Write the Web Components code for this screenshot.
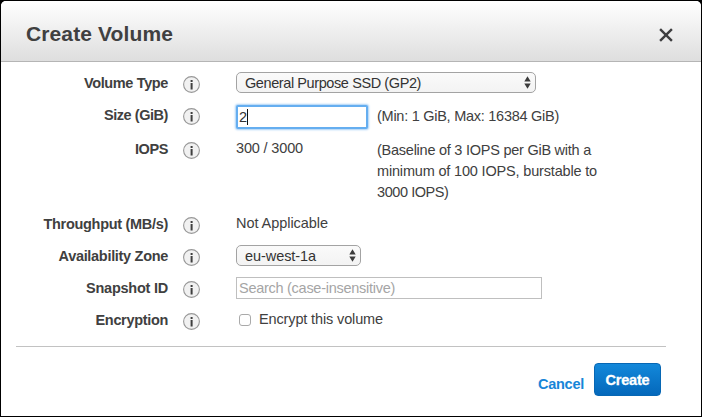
<!DOCTYPE html>
<html lang="en">
<head>
<meta charset="utf-8">
<title>Create Volume</title>
<style>
body{margin:0;background:#000;font:14.5px/20px "Liberation Sans",Arial,sans-serif;color:#404040;overflow:hidden}
</style>
</head>
<body>
<volume-dialog></volume-dialog>
<script>
const define = (name, html, setup) => customElements.define(name, class extends HTMLElement {
  connectedCallback() {
    if (this.shadowRoot) return;
    const t = document.createElement('template');
    t.innerHTML = html;
    this.attachShadow({mode: 'open'}).append(t.content.cloneNode(true));
    if (setup) setup(this, this.shadowRoot);
  }
});

// A single line of text, tracked so that it spans the given width.
define('fit-text', `<style>:host{display:inline-block;white-space:nowrap;width:var(--w)}span{display:inline-block}</style><span><slot></slot></span>`,
  (el, root) => {
    const w = +el.getAttribute('w'), s = root.querySelector('span');
    el.style.setProperty('--w', w + 'px');
    s.style.letterSpacing = (w - s.getBoundingClientRect().width) / el.textContent.length + 'px';
  });

define('info-icon', `<style>:host{display:block;width:17px;height:17px}svg{display:block}</style>
<svg width="17" height="17" viewBox="0 0 17 17"><circle cx="8.5" cy="8.5" r="7.9" fill="#f1f1f1" stroke="#989898" stroke-width="1.1"/><path d="M7.6 4h2v2h-2zM7.6 7h2v6.5h-2z" fill="#3f3f3f"/></svg>`);

define('form-row', `<style>
:host{display:grid;grid-template-columns:168px 17px 1fr;column-gap:15px;height:32px;box-sizing:border-box}
.label{font-weight:bold;text-align:right;padding-top:5px}
info-icon{margin-top:8px}
.value{display:flex;align-items:flex-start;margin-left:21px}
</style><div class="label"><slot name="label"></slot></div><info-icon></info-icon><div class="value"><slot></slot></div>`);

define('select-box', `<style>
:host{display:flex;box-sizing:border-box;height:21px;margin-top:4px;border:1px solid #a3a3a3;border-radius:5px;background:linear-gradient(#fafafa,#f3f3f3);padding:0 4px 0 8px;justify-content:space-between;align-items:center;color:#333}
slot{display:block;line-height:20px;height:19px;margin-top:-1px}
</style><slot></slot><svg width="7" height="13" viewBox="0 0 7 13"><path d="M3.5 .2L6.7 5.6H.3zM3.5 12.8L6.7 7.4H.3z" fill="#3c3c3c"/></svg>`);

define('text-box', `<style>
:host{display:flex;box-sizing:border-box;height:22px;border:1px solid #bfbfbf;background:#fff;padding:0 2px;align-items:center}
:host([focused]){height:24px;border:2px solid #65aef0;border-radius:2px;box-shadow:0 0 2px 1px #a7d0f6;color:#333;padding:0 1px}
.caret{display:none;width:1px;height:16px;background:#111}
:host([focused]) .caret{display:block}
</style><slot></slot><i class="caret"></i>`);

define('check-box', `<style>:host{display:block;box-sizing:border-box;width:12px;height:12px;border:1px solid #aaa;border-radius:3px;background:#fff}</style>`);

define('action-button', `<style>
:host{display:flex;box-sizing:border-box;width:67px;height:33px;border:1px solid #0767b4;border-radius:4px;background:linear-gradient(#1388da,#0468bb);color:#fff;font-weight:bold;justify-content:center;padding-top:6px;-webkit-text-stroke:.3px #fff}
</style><slot></slot>`);

define('close-icon', `<style>:host{display:block}svg{display:block}</style><svg width="14" height="14" viewBox="0 0 14 14"><path d="M1.1 1.1L12.9 12.9M12.9 1.1L1.1 12.9" stroke="#3d3d3f" stroke-width="2.4"/></svg>`);

define('dialog-header', `<style>
:host{display:flex;box-sizing:border-box;height:61px;border-bottom:1px solid #b5b5b5;background:linear-gradient(#fff,#dedede);justify-content:space-between;padding:0 28px 0 25px;border-radius:5px 5px 0 0}
.title{font-size:21px;font-weight:bold;line-height:24px;padding-top:21px}
close-icon{margin-top:27px}
</style><div class="title"><slot></slot></div><close-icon></close-icon>`);

define('dialog-footer', `<style>
:host{display:flex;margin:9px 35px 0 15px;border-top:1px solid #c2c2c2;height:60px;justify-content:flex-end;align-items:flex-start;padding:16px 5px 0 0;box-sizing:border-box}
.cancel{color:#1785d8;font-weight:bold;margin:11px 10px 0 0}
</style><div class="cancel"><slot name="cancel"></slot></div><slot></slot>`);

define('volume-dialog', `<style>
:host{display:block;box-sizing:border-box;width:702px;height:417px;padding:1px;background:#000}
main{height:415px;background:#fff;border-radius:5px 5px 0 0}
.rows{padding-top:6px;margin-left:-1px}
.t{margin-top:4px}
.hint{margin-left:10px;line-height:21px;display:flex;flex-direction:column}
</style>
<main>
<dialog-header><fit-text w="147">Create Volume</fit-text></dialog-header>
<div class="rows">
<form-row><fit-text slot="label" w="84">Volume Type</fit-text><select-box style="width:300px"><fit-text w="176">General Purpose SSD (GP2)</fit-text></select-box></form-row>
<form-row style="height:34px"><fit-text slot="label" w="64">Size (GiB)</fit-text><text-box focused style="width:132px;margin-top:5px"><fit-text w="8">2</fit-text></text-box><div class="hint" style="margin-left:9px;padding-top:6px"><fit-text w="182">(Min: 1 GiB, Max: 16384 GiB)</fit-text></div></form-row>
<form-row style="height:75px"><fit-text slot="label" w="33">IOPS</fit-text><div class="t" style="width:131px"><fit-text w="67">300 / 3000</fit-text></div><div class="hint" style="padding-top:6px"><fit-text w="214">(Baseline of 3 IOPS per GiB with a</fit-text><fit-text w="220">minimum of 100 IOPS, burstable to</fit-text><fit-text w="71.5">3000 IOPS)</fit-text></div></form-row>
<form-row><fit-text slot="label" w="124.5">Throughput (MB/s)</fit-text><div class="t"><fit-text w="92">Not Applicable</fit-text></div></form-row>
<form-row><fit-text slot="label" w="109.5">Availability Zone</fit-text><select-box style="width:125px"><fit-text w="71">eu-west-1a</fit-text></select-box></form-row>
<form-row><fit-text slot="label" w="82">Snapshot ID</fit-text><text-box style="width:306px;margin-top:4px;color:#a5a5a5"><fit-text w="156">Search (case-insensitive)</fit-text></text-box></form-row>
<form-row><fit-text slot="label" w="72.5">Encryption</fit-text><check-box style="margin:9px 8px 0 3px"></check-box><div class="t"><fit-text w="124">Encrypt this volume</fit-text></div></form-row>
</div>
<dialog-footer><fit-text slot="cancel" w="46">Cancel</fit-text><action-button><fit-text w="44">Create</fit-text></action-button></dialog-footer>
</main>`);
</script>
</body>
</html>
